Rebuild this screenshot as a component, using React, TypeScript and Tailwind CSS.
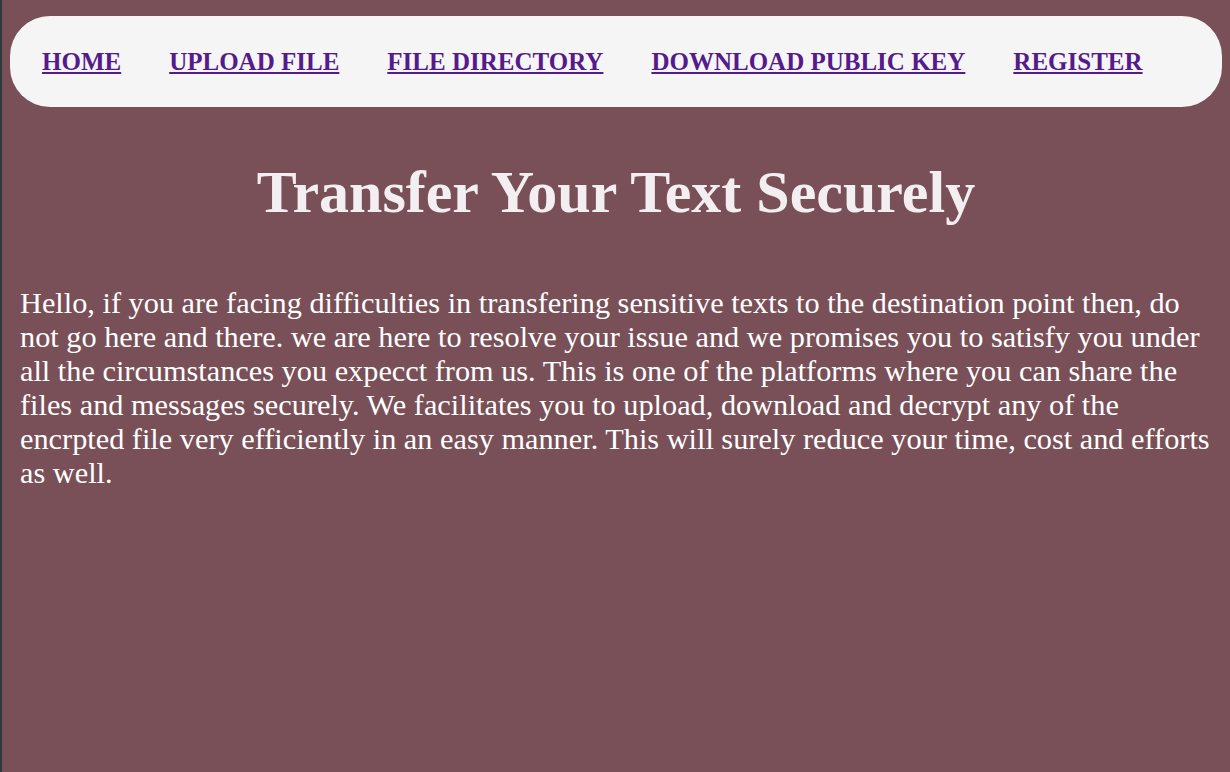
export default function App() {
  const links = ['HOME', 'UPLOAD FILE', 'FILE DIRECTORY', 'DOWNLOAD PUBLIC KEY', 'REGISTER'];

  return (
    <div className="min-h-[772px] bg-[#795057] border-l-2 border-[#2c3a3c] font-['Liberation_Serif',serif]">
      <div className="pt-4 px-2">
        <nav className="bg-[#f5f5f5] rounded-[40px] h-[91px] flex items-center pl-8 gap-[48px]">
          {links.map((l) => (
            <a key={l} href="#" className="text-[25px] font-bold text-[#551a8b] underline">
              {l}
            </a>
          ))}
        </nav>
      </div>

      <h1 className="text-center text-[60px] font-bold text-[#f3eff0] mt-[50px] leading-[70px]">
        Transfer Your Text Securely
      </h1>

      <p className="text-white text-[30.3px] leading-[34px] px-[18px] mt-[59px]">
        Hello, if you are facing difficulties in transfering sensitive texts to the destination point then, do not go here and there. we are here to resolve your issue and we promises you to satisfy you under all the circumstances you expecct from us. This is one of the platforms where you can share the files and messages securely. We facilitates you to upload, download and decrypt any of the encrpted file very efficiently in an easy manner. This will surely reduce your time, cost and efforts as well.
      </p>
    </div>
  );
}
